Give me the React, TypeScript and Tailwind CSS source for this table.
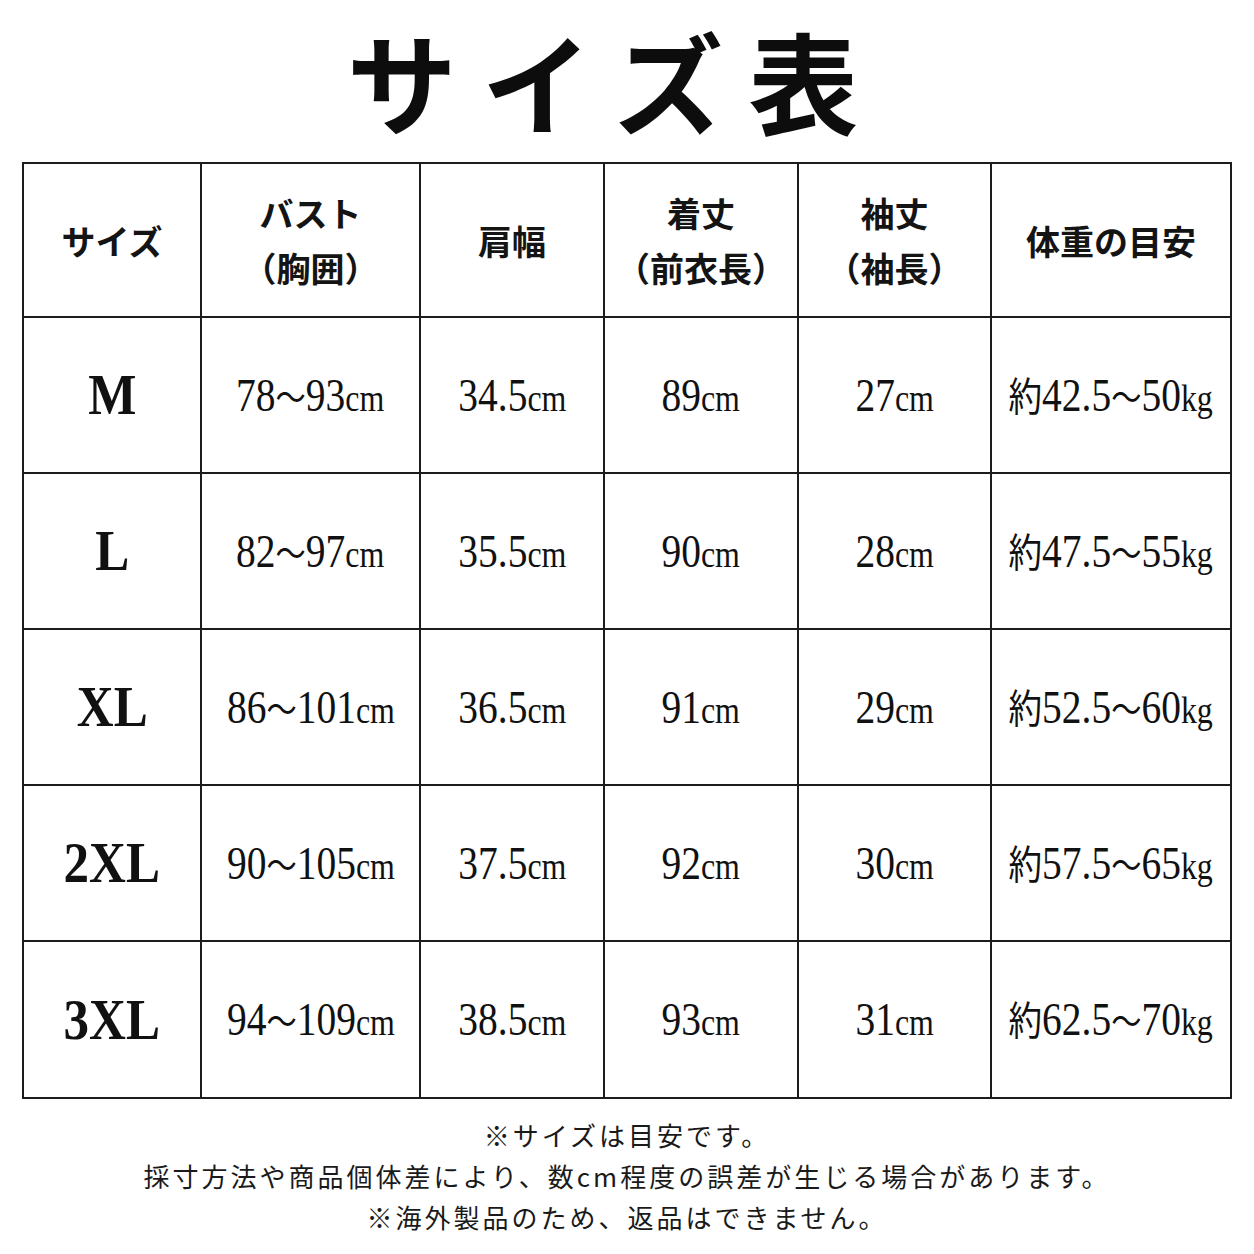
import React from "react";

const headers: { l1: string; l2?: string }[] = [
  { l1: "サイズ" },
  { l1: "バスト", l2: "（胸囲）" },
  { l1: "肩幅" },
  { l1: "着丈", l2: "（前衣長）" },
  { l1: "袖丈", l2: "（袖長）" },
  { l1: "体重の目安" },
];

const rows = [
  ["M", "78～93", "34.5", "89", "27", "42.5～50"],
  ["L", "82～97", "35.5", "90", "28", "47.5～55"],
  ["XL", "86～101", "36.5", "91", "29", "52.5～60"],
  ["2XL", "90～105", "37.5", "92", "30", "57.5～65"],
  ["3XL", "94～109", "38.5", "93", "31", "62.5～70"],
];

const serif = "font-['Liberation_Serif','Noto_Sans_CJK_JP',serif]";
const sans = "font-['Noto_Sans_CJK_JP',sans-serif]";

function Num({ v, unit, prefix }: { v: string; unit: string; prefix?: string }) {
  const parts = v.split("～");
  return (
    <span className={`inline-block scale-x-[0.84] whitespace-nowrap ${serif} text-[#111]`}>
      {prefix && <span className="text-[40px] leading-none">{prefix}</span>}
      <span className="text-[47px] leading-none">{parts[0]}</span>
      {parts.length > 1 && (
        <>
          <span className="text-[36px] leading-none">～</span>
          <span className="text-[47px] leading-none">{parts[1]}</span>
        </>
      )}
      <span className="text-[38px] leading-none">{unit}</span>
    </span>
  );
}

export default function App() {
  return (
    <div className="w-[1254px] h-[1254px] bg-white text-[#141414] flex flex-col items-center">
      <div className="h-[162px] w-full flex items-center justify-center pb-[4px]">
        <h1 className={`${sans} font-bold text-[110px] leading-none tracking-[25px] pr-[24px] text-[#0d0d0d]`}>
          サイズ表
        </h1>
      </div>
      <div className="w-[1210px] grid grid-cols-[178px_219px_184px_194px_193px_240px] border-l-2 border-t-2 border-[#1c1c1c]">
        {headers.map((h, i) => (
          <div
            key={i}
            className={`h-[154px] border-r-2 border-b-2 border-[#1c1c1c] flex flex-col items-center justify-center ${sans} font-bold text-[34px] leading-[55px]`}
          >
            <span>{h.l1}</span>
            {h.l2 && <span>{h.l2}</span>}
          </div>
        ))}
        {rows.map((r, ri) =>
          r.map((c, ci) => (
            <div
              key={`${ri}-${ci}`}
              className={`${ri === 4 ? "h-[157px]" : "h-[156px]"} border-r-2 border-b-2 border-[#1c1c1c] flex items-center justify-center`}
            >
              {ci === 0 ? (
                <span className={`inline-block scale-x-[0.88] ${serif} font-bold text-[58px] leading-none text-[#111]`}>
                  {c}
                </span>
              ) : ci === 5 ? (
                <Num v={c} unit="kg" prefix="約" />
              ) : (
                <Num v={c} unit="cm" />
              )}
            </div>
          ))
        )}
      </div>
      <div className={`${sans} text-[26px] leading-[41px] tracking-[3px] text-[#1a1a1a] text-center pt-[15px]`}>
        <p>※サイズは目安です。</p>
        <p>採寸方法や商品個体差により、数cm程度の誤差が生じる場合があります。</p>
        <p>※海外製品のため、返品はできません。</p>
      </div>
    </div>
  );
}
